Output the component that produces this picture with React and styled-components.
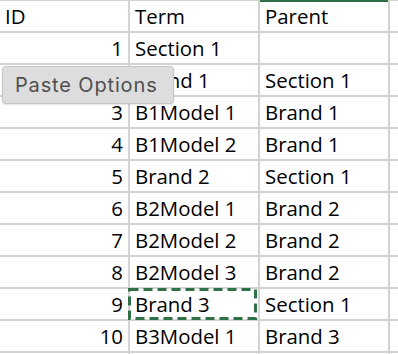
import React from "react";
import styled, { createGlobalStyle } from "styled-components";

const Global = createGlobalStyle`
  html, body { margin: 0; padding: 0; background: #ffffff; }
  body { overflow: hidden; }
`;

const Sheet = styled.div`
  position: relative;
  width: 398px;
  height: 354px;
  overflow: hidden;
  background: #d3d3d3;
  display: grid;
  grid-template-columns: 128px 128px 128px 1fr;
  grid-auto-rows: 30px;
  grid-template-rows: 31px;
  gap: 2px;
  font-family: "Open Sans", "Noto Sans", sans-serif;
  font-size: 20.4px;
  font-weight: 500;
  color: #000;
`;

const Cell = styled.div`
  position: relative;
  background: #fff;
  box-sizing: border-box;
  padding: 0 5px;
  line-height: 30px;
  padding-top: ${(p) => (p.$header ? 1 : 0)}px;
  text-align: ${(p) => (p.$num ? "right" : "left")};
  white-space: nowrap;
  box-shadow: ${(p) =>
    p.$green
      ? "inset 0 2px 0 #2f7046"
      : p.$header
      ? "inset 0 1px 0 #d3d3d3"
      : "none"};
`;

const Marquee = styled.svg`
  position: absolute;
  left: -2px;
  top: -1px;
  width: 129px;
  height: 32px;
  pointer-events: none;
`;

const PastePopup = styled.div`
  position: absolute;
  left: 2px;
  top: 66px;
  width: 172px;
  height: 38px;
  box-sizing: border-box;
  background: #dddddd;
  border: 1px solid #c6c6c6;
  border-radius: 4px;
  box-shadow: 0 1px 2px rgba(0, 0, 0, 0.12);
  display: flex;
  align-items: center;
  padding-left: 12px;
  font-family: Inter, "Liberation Sans", sans-serif;
  font-size: 20px;
  font-weight: 400;
  letter-spacing: 0.85px;
  color: #4f4f4f;
`;

const rows = [
  ["1", "Section 1", ""],
  ["2", "Brand 1", "Section 1"],
  ["3", "B1Model 1", "Brand 1"],
  ["4", "B1Model 2", "Brand 1"],
  ["5", "Brand 2", "Section 1"],
  ["6", "B2Model 1", "Brand 2"],
  ["7", "B2Model 2", "Brand 2"],
  ["8", "B2Model 3", "Brand 2"],
  ["9", "Brand 3", "Section 1"],
  ["10", "B3Model 1", "Brand 3"],
  ["", "", ""],
];

export default function App() {
  return (
    <>
      <Global />
      <Sheet>
        <Cell $header>ID</Cell>
        <Cell $header>Term</Cell>
        <Cell $header $green>Parent</Cell>
        <Cell $header />
        {rows.map((r, i) => (
          <React.Fragment key={i}>
            <Cell $num>{r[0]}</Cell>
            <Cell>
              {r[1]}
              {r[0] === "9" && (
                <Marquee viewBox="0 0 129 32">
                  <rect
                    x="1.5"
                    y="1.5"
                    width="126"
                    height="29"
                    fill="none"
                    stroke="#2f7046"
                    strokeWidth="3"
                    strokeDasharray="9 5"
                  />
                </Marquee>
              )}
            </Cell>
            <Cell>{r[2]}</Cell>
            <Cell />
          </React.Fragment>
        ))}
        <PastePopup>Paste Options</PastePopup>
      </Sheet>
    </>
  );
}
